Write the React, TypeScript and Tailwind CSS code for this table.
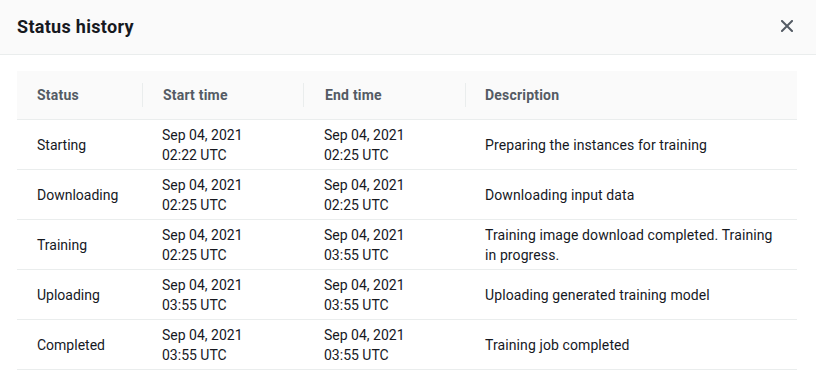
import React from "react";

const rows = [
  { status: "Starting", s: ["Sep 04, 2021", "02:22 UTC"], e: ["Sep 04, 2021", "02:25 UTC"], d: "Preparing the instances for training" },
  { status: "Downloading", s: ["Sep 04, 2021", "02:25 UTC"], e: ["Sep 04, 2021", "02:25 UTC"], d: "Downloading input data" },
  { status: "Training", s: ["Sep 04, 2021", "02:25 UTC"], e: ["Sep 04, 2021", "03:55 UTC"], d: "Training image download completed. Training in progress." },
  { status: "Uploading", s: ["Sep 04, 2021", "03:55 UTC"], e: ["Sep 04, 2021", "03:55 UTC"], d: "Uploading generated training model" },
  { status: "Completed", s: ["Sep 04, 2021", "03:55 UTC"], e: ["Sep 04, 2021", "03:55 UTC"], d: "Training job completed" },
];

export default function App() {
  return (
    <div className="w-[816px] h-[386px] bg-white overflow-hidden" style={{ fontFamily: "Roboto, 'Liberation Sans', sans-serif" }}>
      <div className="h-[55px] bg-[#fafafa] border-b border-[#eaeded] flex items-center justify-between pl-[17px] pr-[23px]">
        <h2 className="text-[18px] font-bold text-[#16191f] leading-[22px] pb-[1px] tracking-[0.3px]">Status history</h2>
        <svg width="12" height="12" viewBox="0 0 12 12" className="mb-[2px]">
          <path d="M1 1 L11 11 M11 1 L1 11" stroke="#545b64" strokeWidth="2" strokeLinecap="square" fill="none" />
        </svg>
      </div>
      <div className="mt-[16px] ml-[17px] w-[780px] text-[14px] leading-[20px] text-[#16191f]">
        <div className="grid grid-cols-[125px_161px_162px_1fr] h-[49px] bg-[#fafafa] border-b border-[#eaeded] items-center font-bold text-[#545b64] tracking-[0.2px]">
          <div className="pl-[20px]">Status</div>
          <div className="flex items-center h-[24px] border-l border-[#eaeded] pl-[20px]">Start time</div>
          <div className="flex items-center h-[24px] border-l border-[#eaeded] pl-[21px]">End time</div>
          <div className="flex items-center h-[24px] border-l border-[#eaeded] pl-[19px]">Description</div>
        </div>
        {rows.map((r) => (
          <div key={r.status} className="grid grid-cols-[125px_161px_162px_1fr] h-[50px] border-b border-[#eaeded] items-center">
            <div className="pl-[20px]">{r.status}</div>
            <div className="pl-[20px]">
              <div>{r.s[0]}</div>
              <div>{r.s[1]}</div>
            </div>
            <div className="pl-[21px]">
              <div>{r.e[0]}</div>
              <div>{r.e[1]}</div>
            </div>
            <div className="pl-[20px] pr-[20px] tracking-[0.1px]">{r.d}</div>
          </div>
        ))}
      </div>
    </div>
  );
}
